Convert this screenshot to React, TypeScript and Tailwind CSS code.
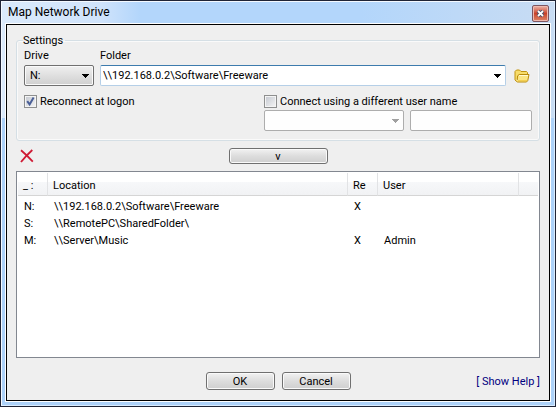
import type { ReactNode, SelectHTMLAttributes } from "react";

function Arrow({ color }: { color: string }) {
  return (
    <svg width="7" height="4" viewBox="0 0 7 4" className="block" shapeRendering="crispEdges" aria-hidden="true">
      <path d="M0 0h7v1H0zM1 1h5v1H1zM2 2h3v1H2zM3 3h1v1H3z" fill={color} />
    </svg>
  );
}

type DropDownProps = SelectHTMLAttributes<HTMLSelectElement> & { arrow: string; wrap: string };

function DropDown({ arrow, wrap, className, children, ...rest }: DropDownProps) {
  return (
    <div className={`grid items-center ${wrap}`}>
      <select
        {...rest}
        className={`col-start-1 row-start-1 h-[21px] w-full appearance-none rounded-[2px] border pr-4 outline-none ${className}`}
      >
        {children}
      </select>
      <span className="pointer-events-none col-start-1 row-start-1 mt-px mr-[5px] justify-self-end">
        <Arrow color={arrow} />
      </span>
    </div>
  );
}

function PushButton({ className, children }: { className: string; children: ReactNode }) {
  return (
    <button
      type="button"
      className={`flex items-center justify-center rounded-[3px] border border-[#707070] bg-linear-to-b from-[#f2f2f2] from-0% via-[#dddddd] via-50% to-[#cfcfcf] to-100% shadow-[inset_0_0_0_1px_#fafafa] ${className}`}
    >
      {children}
    </button>
  );
}

function Tick({ id, label, checked }: { id: string; label: string; checked?: boolean }) {
  return (
    <div className="flex h-[15px] items-center gap-[3px]">
      <span className="grid">
        <input
          id={id}
          type="checkbox"
          defaultChecked={checked}
          className="peer col-start-1 row-start-1 size-[13px] appearance-none border border-[#8e8f8f] bg-linear-to-br from-[#c3c7cf] to-[#f6f6f6] shadow-[inset_0_0_0_1px_#f4f4f4]"
        />
        <svg
          viewBox="0 0 13 13"
          className="pointer-events-none invisible col-start-1 row-start-1 size-[13px] peer-checked:visible"
          aria-hidden="true"
        >
          <path d="M3.2 6.2L5.6 9.4L9.6 2.6" fill="none" stroke="#4a5f97" strokeWidth="2" />
        </svg>
      </span>
      <label htmlFor={id}>{label}</label>
    </div>
  );
}

const drives = [
  { drive: "N:", location: "\\\\192.168.0.2\\Software\\Freeware", re: "X", user: "" },
  { drive: "S:", location: "\\\\RemotePC\\SharedFolder\\", re: "", user: "" },
  { drive: "M:", location: "\\\\Server\\Music", re: "X", user: "Admin" },
];

const th =
  "h-[23px] border-r border-b border-r-[#e2e3e5] border-b-[#d5d5d5] bg-linear-to-b from-white from-40% via-[#f7f8fa] via-40% to-[#f1f2f4] pt-[3px] pl-[5px] text-left font-normal";
const td = "h-[17px] pl-[6px]";

export default function App() {
  return (
    <div className="flex min-h-screen w-full flex-col border border-[#1f2436] font-[Roboto,Tahoma,sans-serif] text-[11px] leading-[15px] text-black">
      <div className="flex flex-1 flex-col border border-t-[#f4f9ff] border-r-[#d9ecff] border-b-[#d9ecff] border-l-[#f4f9ff] bg-[#b3d6fb] bg-[linear-gradient(to_bottom,transparent_116px,#add2f9_116px),linear-gradient(to_right,#dbeafb,#cfe3fb_18%,#b3d6fb_25%,#b3d6fb_65%,#c8dcf3)] px-[3px] pb-[3px]">
        <header className="flex h-[21px] items-start justify-between pl-[3px]">
          <h1 className="text-[12px] leading-[21px]">Map Network Drive</h1>
          <button
            type="button"
            aria-label="Close"
            className="mt-[3px] mr-[2px] flex h-[17px] w-[17px] items-center justify-center rounded-[2px] border border-[#7d5560] bg-linear-to-b from-[#e9b3a8] from-0% via-[#c8412a] via-50% to-[#dc8468] shadow-[inset_0_0_0_1px_#eeb9ae]"
          >
            <svg width="9" height="9" viewBox="0 0 9 9" aria-hidden="true">
              <path d="M2 2L7 7M7 2L2 7" stroke="#46506a" strokeWidth="3.6" />
              <path d="M2 2L7 7M7 2L2 7" stroke="#fff" strokeWidth="1.8" />
            </svg>
          </button>
        </header>

        <div className="flex flex-1 flex-col border border-white">
          <main className="flex flex-1 flex-col border border-black bg-[#efefef] px-[9px] pt-[8px] pb-[10px]">
            <fieldset className="h-[108px] min-w-0 rounded-[3px] border border-[#d5dfe5] px-[7px] shadow-[inset_0_0_0_1px_#fafafa]">
              <legend className="-ml-px h-[15px] pr-[2px]">Settings</legend>
              <div className="flex items-end gap-[6px]">
                <div className="w-[70px]">
                  <label htmlFor="drive" className="block h-[17px]">
                    Drive
                  </label>
                  <DropDown
                    id="drive"
                    wrap="w-full"
                    arrow="#000"
                    className="border-[#707070] bg-linear-to-b from-[#f0f0f0] to-[#cfcfcf] pl-[5px] shadow-[inset_0_0_0_1px_#fafafa]"
                  >
                    <option>N:</option>
                  </DropDown>
                </div>
                <div className="min-w-0 flex-1">
                  <label htmlFor="folder" className="block h-[17px]">
                    Folder
                  </label>
                  <DropDown
                    id="folder"
                    wrap="w-full"
                    arrow="#000"
                    className="border-[#b5cfe7] border-t-[#3d7bad] bg-white pl-[2px]"
                  >
                    <option>{"\\\\192.168.0.2\\Software\\Freeware"}</option>
                  </DropDown>
                </div>
                <button type="button" aria-label="Browse" className="mr-[2px] mb-[2px] ml-[2px]">
                  <svg width="16" height="16" viewBox="0 0 16 16" className="block" aria-hidden="true">
                    <path d="M1 12V3.500L2.500 2H5.500L7 3.500h5.500l1 1v2.500" fill="#f7dc6a" stroke="#c0930f" />
                    <path
                      d="M1.200 12L2.200 13.200 3.500 14H12.500L13.800 12.500 15 6.500H5.200L3.600 7.800 3.200 12"
                      fill="#fbe583"
                      stroke="#b98a0a"
                    />
                    <path d="M5 7.500h9" stroke="#fff9cf" />
                    <path d="M4 12.700h9" stroke="#f1cb45" />
                  </svg>
                </button>
              </div>

              <div className="mt-[8px] flex items-start gap-[7px]">
                <div className="flex-1">
                  <Tick id="reconnect" label="Reconnect at logon" checked />
                </div>
                <div className="w-[268px]">
                  <Tick id="other-user" label="Connect using a different user name" />
                  <div className="mt-px flex gap-[6px]">
                    <DropDown
                      aria-label="User name"
                      disabled
                      wrap="w-[140px]"
                      arrow="#a0a0a0"
                      className="border-[#adadad] bg-[#fefefe] opacity-100"
                    />
                    <input
                      aria-label="Password"
                      type="password"
                      disabled
                      className="h-[21px] min-w-0 flex-1 rounded-[2px] border border-[#adadad] bg-[#fefefe]"
                    />
                  </div>
                </div>
              </div>
            </fieldset>

            <div className="grid h-[30px] grid-cols-[1fr_99px_1fr] items-center">
              <button type="button" aria-label="Remove" className="ml-[4px] justify-self-start">
                <svg width="14" height="14" viewBox="0 0 14 14" className="block" aria-hidden="true">
                  <path d="M1 1.2C5 4.5 9 8.5 12.8 12.6" fill="none" stroke="#cf1a34" strokeWidth="1.8" />
                  <path d="M12.3 1C8.5 4.5 4.5 8.5 1 13" fill="none" stroke="#cf1a34" strokeWidth="1.8" />
                </svg>
              </button>
              <PushButton className="h-[16px]">v</PushButton>
            </div>

            <div className="flex-1 border border-[#828790] bg-white p-px">
              <table className="w-full table-fixed border-separate border-spacing-0">
                <colgroup>
                  <col className="w-[30px]" />
                  <col />
                  <col className="w-[30px]" />
                  <col className="w-[141px]" />
                  <col className="w-[19px]" />
                </colgroup>
                <thead>
                  <tr>
                    <th className={th}>_ :</th>
                    <th className={th}>Location</th>
                    <th className={th}>Re</th>
                    <th className={th}>User</th>
                    <th className={`${th} border-r-0`} />
                  </tr>
                </thead>
                <tbody>
                  <tr className="h-[2px]" />
                  {drives.map((d) => (
                    <tr key={d.drive}>
                      <td className={td}>{d.drive}</td>
                      <td className={td}>{d.location}</td>
                      <td className={td}>{d.re}</td>
                      <td className={td}>{d.user}</td>
                      <td />
                    </tr>
                  ))}
                </tbody>
              </table>
            </div>

            <footer className="mt-[14px] grid grid-cols-[1fr_auto_1fr] items-center">
              <div className="col-start-2 flex gap-[7px]">
                <PushButton className="h-[18px] w-[69px]">OK</PushButton>
                <PushButton className="h-[18px] w-[69px]">Cancel</PushButton>
              </div>
              <a href="#help" className="justify-self-end text-[#000080]">
                [ Show Help ]
              </a>
            </footer>
          </main>
        </div>
      </div>
    </div>
  );
}
